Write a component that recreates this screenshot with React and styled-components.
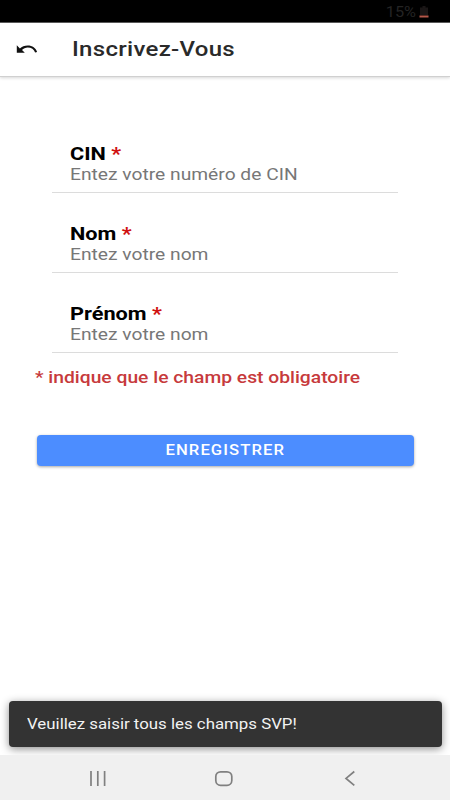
import React from "react";
import styled, { createGlobalStyle } from "styled-components";

const GlobalStyle = createGlobalStyle`
    * {
        box-sizing: border-box;
    }
    body {
        margin: 0;
        background: #fff;
        font-family: Roboto, "Liberation Sans", sans-serif;
    }
`;

const Screen = styled.div`
    width: 450px;
    height: 800px;
    display: flex;
    flex-direction: column;
    overflow: hidden;
    background: #fff;
`;

const StatusBar = styled.div`
    flex: none;
    height: 23px;
    padding: 2px 21px 0 0;
    display: flex;
    justify-content: flex-end;
    align-items: center;
    gap: 3px;
    background: #000;
    border-bottom: 1px solid #5c5c5c;
    color: #242424;
    font-size: 14px;
    line-height: 20px;
`;

const Wide = styled.span`
    display: inline-block;
    white-space: pre;
    transform: scaleX(${props => props.$scale || 1.165});
    transform-origin: ${props => props.$origin || "left"} center;
`;

const Header = styled.header`
    flex: none;
    height: 54px;
    padding: 0 0 1px 16px;
    display: flex;
    align-items: center;
    background: #fff;
    border-bottom: 1px solid #d0d0d0;
    box-shadow: 0 1px 3px rgba(0, 0, 0, 0.16);
`;

const BackIcon = styled.svg`
    width: 22px;
    height: 12px;
    margin: 0 34px 0 0;
`;

const Title = styled.h1`
    margin: 0;
    font-size: 20px;
    font-weight: 500;
    line-height: 24px;
    letter-spacing: 0.25px;
    color: #2a2a2a;
`;

const Content = styled.main`
    flex: 1;
    padding-top: 56px;
    display: flex;
    flex-direction: column;
`;

const Field = styled.label`
    display: block;
    height: ${props => (props.$first ? 60 : 80)}px;
    margin: 0 52px;
    padding: ${props => (props.$first ? 10 : 30)}px 0 0 18px;
    border-bottom: 1px solid #dcdcdc;
`;

const FieldName = styled.div`
    font-size: 18px;
    font-weight: 700;
    line-height: 21px;
    color: #000;
`;

const Star = styled.span`
    color: #d00f0f;
`;

const Placeholder = styled.div`
    padding-top: 1px;
    font-size: 16.5px;
    line-height: 20px;
    color: #777;
`;

const Note = styled.p`
    margin: 14px 0 0 35px;
    font-size: 16.5px;
    font-weight: 500;
    line-height: 22px;
    color: #c73a3c;
`;

const SubmitButton = styled.button`
    flex: none;
    height: 31px;
    margin: 46px 36px 0 37px;
    padding: 0;
    border: 0;
    border-radius: 4px;
    background: #4c8dff;
    box-shadow: 0 1px 3px rgba(0, 0, 0, 0.35);
    color: #fff;
    font-family: inherit;
    font-size: 14px;
    font-weight: 500;
    line-height: 31px;
    letter-spacing: 0.9px;
`;

const Toast = styled.div`
    flex: none;
    height: 46px;
    margin: 0 8px 8px 9px;
    padding-left: 17.5px;
    display: flex;
    align-items: center;
    border-radius: 4px;
    background: #333;
    box-shadow: 0 2px 8px rgba(0, 0, 0, 0.45);
    color: #f2f2f2;
    font-size: 15px;
    line-height: 20px;
`;

const NavBar = styled.nav`
    flex: none;
    height: 45px;
    background: #f0f0f0;
    svg {
        display: block;
    }
`;

const FIELDS = [
    { name: "CIN", hint: "Entez votre numéro de CIN" },
    { name: "Nom", hint: "Entez votre nom" },
    { name: "Prénom", hint: "Entez votre nom" }
];

const App = () => (
    <>
        <GlobalStyle />
        <Screen>
            <StatusBar>
                <Wide $origin="right">15%</Wide>
                <svg width="10" height="14" viewBox="0 0 10 14">
                    <path d="M3.500 1h3v1.500H9V10H1V2.500h2.500z" fill="#1a1616" />
                    <rect x="0.500" y="10.500" width="9" height="2" fill="#b5584a" />
                </svg>
            </StatusBar>
            <Header>
                <BackIcon viewBox="0 0 22 12">
                    <path d="M.8 2.300v7.500h8L6 7C7.500 5.500 9.400 4.600 11.700 4.600c3.600 0 6.500 1.900 7.400 5l2-.6C19.800 5.100 16.400 2.500 11.700 2.500 8.600 2.500 5.800 3.600 3.900 5.400z" fill="#111" />
                </BackIcon>
                <Title><Wide $scale={1.2}>Inscrivez-Vous</Wide></Title>
            </Header>
            <Content>
                {FIELDS.map((field, index) => (
                    <Field key={field.name} $first={index === 0}>
                        <FieldName>
                            <Wide $scale={1.205}>{field.name} <Star>*</Star></Wide>
                        </FieldName>
                        <Placeholder><Wide>{field.hint}</Wide></Placeholder>
                    </Field>
                ))}
                <Note><Wide $scale={1.168}>* indique que le champ est obligatoire</Wide></Note>
                <SubmitButton type="button">
                    <Wide $scale={1.19} $origin="center">ENREGISTRER</Wide>
                </SubmitButton>
            </Content>
            <Toast role="status">
                <Wide $scale={1.122}>Veuillez saisir tous les champs SVP!</Wide>
            </Toast>
            <NavBar>
                <svg width="450" height="45" viewBox="0 0 450 45" fill="none" stroke="#808080" strokeWidth="1.700">
                    <path d="M91 16v15M97.800 16v15M104.600 16v15" />
                    <rect x="215.800" y="16.800" width="16" height="13.500" rx="4.800" />
                    <path d="M354.300 16.500L346 23.400l8.300 7" />
                </svg>
            </NavBar>
        </Screen>
    </>
);

export default App;
